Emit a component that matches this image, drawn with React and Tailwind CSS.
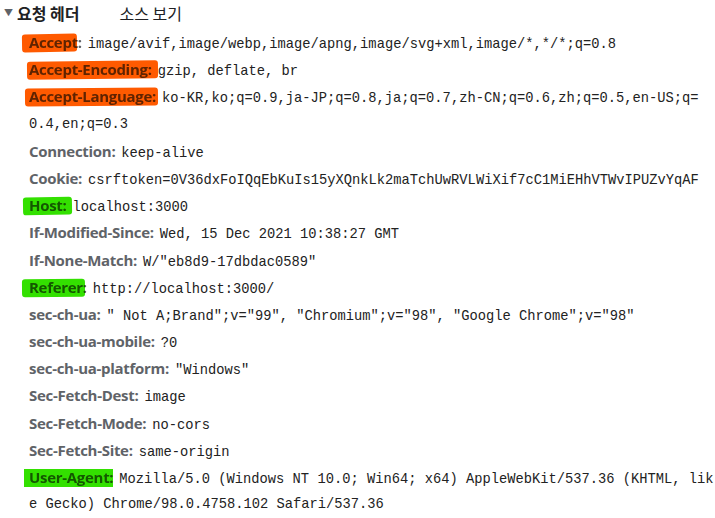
import React from 'react';

// Request headers as shown in the DevTools network panel
// mark: highlighter stroke drawn behind the header name
const headers = [
  { name: 'Accept', value: 'image/avif,image/webp,image/apng,image/svg+xml,image/*,*/*;q=0.8', mark: 'orange', hl: 'w-[55px] -left-[7px] rotate-[-1deg]' },
  { name: 'Accept-Encoding', value: 'gzip, deflate, br', mark: 'orange', hl: 'w-[131px] -left-[2px] rotate-[-0.6deg]' },
  { name: 'Accept-Language', value: 'ko-KR,ko;q=0.9,ja-JP;q=0.8,ja;q=0.7,zh-CN;q=0.6,zh;q=0.5,en-US;q=', wrap: '0.4,en;q=0.3', mark: 'orange', hl: 'w-[133px] -left-[4px] rotate-[-0.5deg]' },
  { name: 'Connection', value: 'keep-alive' },
  { name: 'Cookie', value: 'csrftoken=0V36dxFoIQqEbKuIs15yXQnkLk2maTchUwRVLWiXif7cC1MiEHhVTWvIPUZvYqAF' },
  { name: 'Host', value: 'localhost:3000', mark: 'green', hl: 'w-[49px] -left-[6px] rotate-[-1deg]' },
  { name: 'If-Modified-Since', value: 'Wed, 15 Dec 2021 10:38:27 GMT' },
  { name: 'If-None-Match', value: 'W/"eb8d9-17dbdac0589"' },
  { name: 'Referer', value: 'http://localhost:3000/', mark: 'green', hl: 'w-[63px] -left-[7px] rotate-[-0.5deg]' },
  { name: 'sec-ch-ua', value: '" Not A;Brand";v="99", "Chromium";v="98", "Google Chrome";v="98"' },
  { name: 'sec-ch-ua-mobile', value: '?0' },
  { name: 'sec-ch-ua-platform', value: '"Windows"' },
  { name: 'Sec-Fetch-Dest', value: 'image' },
  { name: 'Sec-Fetch-Mode', value: 'no-cors' },
  { name: 'Sec-Fetch-Site', value: 'same-origin' },
  { name: 'User-Agent', value: 'Mozilla/5.0 (Windows NT 10.0; Win64; x64) AppleWebKit/537.36 (KHTML, lik', wrap: 'e Gecko) Chrome/98.0.4758.102 Safari/537.36', mark: 'green', hl: 'w-[89px] -left-[5px] rounded-none' },
];

const HeaderRow = ({ item }) => {
  const bg = item.mark === 'orange' ? 'bg-[#ff5a00]' : 'bg-[#33e000]';
  return (
    <div className="pl-[29px]">
      <div className="h-[27.2px] leading-[27.2px] flex items-baseline whitespace-nowrap">
        <span className="relative isolate font-bold text-[15px] text-[#5f6368] font-['Open_Sans','Noto_Sans',sans-serif] tracking-[-0.3px]">
          {item.mark && (
            <span className={`absolute top-[5px] h-[18px] rounded-[3px] -z-10 ${bg} ${item.hl}`}></span>
          )}
          <span className={item.mark ? 'mix-blend-multiply' : ''}>{item.name}:</span>
        </span>
        <span className="ml-[6px] text-[13.75px] text-[#222] font-['Liberation_Mono',monospace]">{item.value}</span>
      </div>
      {item.wrap && (
        <div className="h-[27.2px] leading-[27.2px] whitespace-nowrap text-[13.75px] text-[#222] font-['Liberation_Mono',monospace]">
          {item.wrap}
        </div>
      )}
    </div>
  );
};

const App = () => {
  return (
    <div className="w-[715px] h-[518px] bg-white overflow-hidden">
      {/* Section title */}
      <div className="h-[26px] flex items-center pl-[4px] text-[16px] text-[#202124] font-['Noto_Sans_CJK_KR',sans-serif]">
        <span className="text-[9px] text-[#5f6368] mr-[4px]">▼</span>
        <span className="font-bold">요청 헤더</span>
        <span className="ml-[40px]">소스 보기</span>
      </div>
      {/* Header list */}
      <div className="pt-[3px]">
        {headers.map((item) => (
          <HeaderRow key={item.name} item={item} />
        ))}
      </div>
    </div>
  );
};

export default App;
